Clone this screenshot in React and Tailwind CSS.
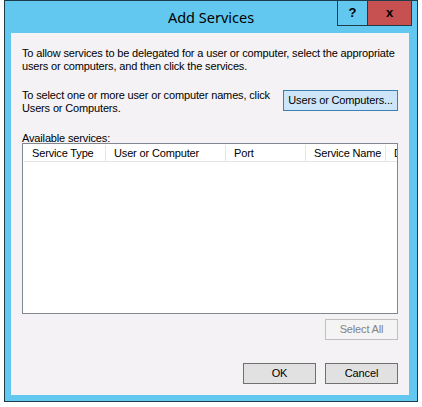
import React from 'react';

const font = { fontFamily: '"Liberation Sans", Arial, sans-serif' };

const columns = [
  { label: 'Service Type', w: 'w-[82px]' },
  { label: 'User or Computer', w: 'w-[120px]' },
  { label: 'Port', w: 'w-[80px]' },
  { label: 'Service Name', w: 'w-[80px]' },
  { label: 'D', w: 'flex-1' },
];

const Btn = ({ children, className = '' }) => (
  <button
    className={`h-[21px] w-[73px] border text-[11px] leading-none flex items-center justify-center ${className}`}
  >
    {children}
  </button>
);

export default function App() {
  return (
    <div className="w-[422px] h-[407px] bg-white pl-[4px]">
      <div className="w-[414px] h-[402px] border border-[#1d3d4a] bg-[#62c8ef] flex flex-col">
        {/* title bar */}
        <div className="relative h-[32px] flex items-center justify-center">
          <span
            className="text-[14.5px] text-black pt-[2px]"
            style={{ fontFamily: '"Noto Sans", "Open Sans", sans-serif' }}
          >
            Add Services
          </span>
          <div className="absolute top-[-1px] right-[5px] flex">
            <div className="w-[30px] h-[26px] border border-[#1d3d4a] border-r-0 bg-[#62c8ef] flex items-center justify-center text-[13px] font-bold text-black" style={font}>
              ?
            </div>
            <div className="w-[45px] h-[26px] border border-[#1d3d4a] bg-[#c75050] flex items-center justify-center text-[13px] font-bold text-black" style={font}>
              x
            </div>
          </div>
        </div>

        {/* client area */}
        <div className="mx-[6px] w-[398px] h-[362px] bg-[#f4f2f5] px-[11px] pt-[14px] text-[11px] leading-[13px] tracking-[-0.15px] text-black" style={font}>
          <p>
            To allow services to be delegated for a user or computer, select the appropriate users or computers, and then click the services.
          </p>

          <div className="mt-[16px] flex justify-between items-start">
            <p className="w-[258px]">
              To select one or more user or computer names, click Users or Computers.
            </p>
            <button className="w-[115px] h-[21px] mt-[1px] border border-[#3c7fb1] bg-[#cde5f8] text-[11px] leading-none">
              Users or Computers...
            </button>
          </div>

          <p className="mt-[17px]">Available services:</p>

          {/* list */}
          <div className="mt-[-2px] h-[171px] border border-[#828790] bg-white pt-[1px] pl-[1px]">
            <div className="flex h-[17px] border-b border-[#e5e5e5] overflow-hidden">
              {columns.map((c) => (
                <div
                  key={c.label}
                  className={`${c.w} shrink-0 border-r border-[#e5e5e5] pl-[8px] flex items-center whitespace-nowrap`}
                >
                  {c.label}
                </div>
              ))}
            </div>
          </div>

          <div className="mt-[5px] flex justify-end">
            <Btn className="border-[#bfbfbf] bg-[#f4f4f4] text-[#838383]">Select All</Btn>
          </div>

          <div className="mt-[23px] flex justify-end gap-[9px]">
            <Btn className="border-[#707070] bg-[#e1e1e1]">OK</Btn>
            <Btn className="border-[#707070] bg-[#e1e1e1]">Cancel</Btn>
          </div>
        </div>
      </div>
    </div>
  );
}
